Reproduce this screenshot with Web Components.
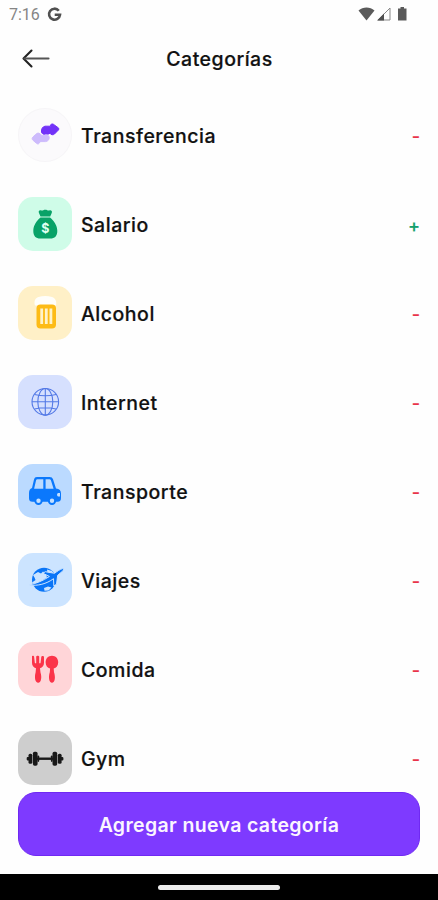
<!DOCTYPE html>
<html lang="es">
<head>
<meta charset="UTF-8">
<meta name="viewport" content="width=device-width, initial-scale=1.0">
<title>Categorías</title>
<style>
    body {
        margin: 0;
        background: #fefefe;
        font-family: Inter, "Liberation Sans", sans-serif;
        color: #111111;
    }
</style>
</head>
<body>
<categories-screen></categories-screen>

<script>
const ICONS = {
    transfer: `
        <path fill="#7232f8" stroke="#7232f8" stroke-width="1" stroke-linejoin="round" d="M27 18.200h5.500c0-2 1-2.700 2.800-2l4.700 3.400c1.200.8 1.200 2 0 2.800L36.500 26c-1.500 1.300-3.500 1-4.500-.8-2 1.300-3.500 1.600-5 1.300-2-.2-3-.7-3.500-2.500-.4-3 1-5.300 3.500-5.800z"/>
        <path fill="#cdbbfc" stroke="#cdbbfc" stroke-width="1" stroke-linejoin="round" d="M22 25.900c-1.500-1.500-3-.7-4.500.6L14.900 29c-1 1-1 2.200 0 3.200l3.600 3.100c1.500 1.300 3 .5 3.500-1.700h5.600c2.500-.4 4-2.100 3.500-4.600-.5-2-2.500-2.800-4.300-2-1.700 1-3.300.7-4.800-1.100z"/>`,
    salary: `
        <path fill="#08a267" d="M21.500 13.500c1.500-.7 2.500.5 3.800-.2 1.300-.6 2.700-.6 4 0 1.200.7 2.200-.5 3.700.2 1.200.6 1.200 1.500.5 3l-1.300 3h-9.700l-1.300-3c-.6-1.500-.8-2.400.3-3zM22.500 20.500h9.500c4 3.200 7.300 8 7.300 13.500 0 5-2.500 7.500-7 7.500H22.300c-4.500 0-7-2.500-7-7.500 0-5.500 3.200-10.300 7.200-13.500z"/>
        <text x="27.300" y="36" text-anchor="middle" font-size="12.500" font-weight="700" fill="#dffff1">$</text>`,
    beer: `
        <path fill="#fffefa" d="M17 19.500c-1.300-4 0-7.500 3.500-8.500 4.500-1.500 9-1.500 13.500 0 3.500 1.200 5 4.500 4 8.500z"/>
        <rect x="18.500" y="18.500" width="19.500" height="24" rx="4" fill="#fdbb16"/>
        <path stroke="#fff3c9" stroke-width="2.800" d="M23.700 22.500v15.500M28.300 22.500v15.500M32.900 22.500v15.500"/>`,
    globe: `
        <g fill="none" stroke="#5379e6" stroke-width="1.100">
            <circle cx="27.300" cy="26.800" r="13.300"/>
            <ellipse cx="27.300" cy="26.800" rx="7.500" ry="13.300"/>
            <path d="M27.300 13.500v26.600M14 26.800h26.600M16.500 19.500c6.500 1.600 15 1.600 21.600 0M16.500 34c6.500-1.600 15-1.600 21.600 0"/>
        </g>`,
    car: `
        <path fill="#0b78fc" fill-rule="evenodd" d="M19 13h12.500c2 0 3 .8 3.600 2.500L38 24.500c3.500.3 5 2 5 5v4.500c0 2.600-1 3.700-3.300 3.700H14.500c-2.300 0-3.500-1.100-3.500-3.500V29c0-2.700 1-4.300 3-5l2-8.500c.5-1.700 1.300-2.500 3-2.500zM19.300 15.200c-.6 0-1 .3-1.200 1l-2 8.500h9.200v-9.500zM27.600 15.200v9.500h8l-2.700-8.500c-.3-.7-.7-1-1.400-1z"/>
        <path fill="#c3dfff" d="M40 29h2v3.500h-2c-1.300-.6-1.300-2.900 0-3.500z"/>
        <g fill="#c3dfff" stroke="#0b78fc" stroke-width="2"><circle cx="20.500" cy="36.700" r="3.200"/><circle cx="34" cy="36.700" r="3.200"/></g>`,
    travel: `
        <circle cx="26" cy="26.800" r="12" fill="#0a75f7"/>
        <path fill="#cce4ff" d="M15 22l5-3 3 1.500 2-2 3 2.500 1 3.500-4 2.500 1.500 2-4.500 2.500-3-1.500-3 1-2-1.500 3.500-2.500-1-2.500zM29 16.500l5 1.500 2 3-4 1.500-2.500-2zM26 35l4-1.500 3.500 1-3 3-4 .3z"/>
        <path fill="#0a75f7" stroke="#cce4ff" stroke-width="1" d="M11 32c7-1.500 14-4.200 20.400-8.500l-6.400-3.200 2.300-1.600 9.200 1.600c2.500-1.800 5.400-4 8-4.700 1.500 0 1.200 1.500 0 2.600l-4.800 4.100-1.200 9-2.700 1.600-.3-7.200c-7 5.200-15.800 7.500-24.500 6.300z"/>`,
    food: `
        <path fill="#fb3449" d="M14 14.200c1-.6 2-.5 2.100.5l.8 6.500h1.300v-6.700c.3-1 2.700-1 3 0v6.700h1.300l.8-6.500c.2-1 2.200-1.100 2.700-.2v6.200c0 3-1.500 4.800-4 5.500l.5 4.200c1.500 4.500.8 10.300-2.300 10.300s-4-5.500-2.600-10.300l.4-4.200c-2.500-.7-4-2.500-4-5.500z"/>
        <path fill="#fb3449" d="M34 13.700c3.600 0 6.200 2.800 6.200 6.500 0 3.300-1.800 5.700-4.500 6.400l.3 3.600c1.700 4.800 1 10.500-2 10.500s-3.800-5.700-2.200-10.500l.3-3.600c-2.700-.7-4.500-3.100-4.500-6.400 0-3.700 2.700-6.500 6.400-6.500z"/>`,
    gym: `
        <g fill="#181818">
            <rect x="8.700" y="26" width="3" height="3.500" rx="1"/><rect x="10.500" y="22.700" width="3.800" height="10" rx="1.500"/><rect x="14.900" y="20.700" width="4.700" height="14" rx="1.700"/>
            <rect x="19" y="26.500" width="17" height="2.400"/>
            <rect x="34.500" y="20.700" width="4.700" height="14" rx="1.700"/><rect x="39.800" y="22.700" width="3.800" height="10" rx="1.500"/><rect x="42.400" y="26" width="3" height="3.500" rx="1"/>
            <rect x="19.500" y="24.500" width="1.700" height="6.400" rx=".8"/><rect x="32.900" y="24.500" width="1.700" height="6.400" rx=".8"/>
        </g>`
};

const CATEGORIES = [
    { name: 'Transferencia', icon: 'transfer', bg: '#fbfafc', sign: '-', round: true },
    { name: 'Salario', icon: 'salary', bg: '#cffce8', sign: '+' },
    { name: 'Alcohol', icon: 'beer', bg: '#fff0c7', sign: '-' },
    { name: 'Internet', icon: 'globe', bg: '#d6e0fe', sign: '-' },
    { name: 'Transporte', icon: 'car', bg: '#bbdaff', sign: '-' },
    { name: 'Viajes', icon: 'travel', bg: '#cce4ff', sign: '-' },
    { name: 'Comida', icon: 'food', bg: '#ffd5d8', sign: '-' },
    { name: 'Gym', icon: 'gym', bg: '#cecece', sign: '-' }
];

class StatusBar extends HTMLElement {
    constructor() {
        super();
        this.attachShadow({ mode: 'open' });
    }

    connectedCallback() {
        this.shadowRoot.innerHTML = `
            <style>
                :host {
                    display: flex;
                    align-items: center;
                    box-sizing: border-box;
                    height: 28px;
                    padding: 0 30px 0 9px;
                    font: 400 16px Roboto, sans-serif;
                    color: #858585;
                }

                .google {
                    margin-left: 7px;
                }

                .status {
                    margin-left: auto;
                }

                svg {
                    display: block;
                }
            </style>
            <span>7:16</span>
            <svg class="google" width="15" height="15" viewBox="0 0 15 15" fill="none" stroke="#505050" stroke-width="2.600">
                <path d="M11.800 3.700A5.500 5.500 0 1 0 13 7.800H7.700"/>
            </svg>
            <svg class="status" width="50" height="16" viewBox="0 0 50 16">
                <path fill="#5a5a5a" d="M.5 4.500c4.500-4 11.500-4 16 0l-8 10z"/>
                <path fill="none" stroke="#888" d="M20 14L32 2v12z"/>
                <path fill="#505050" d="M19 14.500l7-7v7z"/>
                <path fill="#5a5a5a" d="M42.500 1H46v1.500h2.500v12H40v-12h2.500z"/>
            </svg>
        `;
    }
}

class ScreenHeader extends HTMLElement {
    constructor() {
        super();
        this.attachShadow({ mode: 'open' });
    }

    connectedCallback() {
        this.shadowRoot.innerHTML = `
            <style>
                :host {
                    display: grid;
                    grid-template-columns: 30px 1fr 30px;
                    align-items: center;
                    height: 62px;
                    padding: 0 19px 0 20px;
                }

                h1 {
                    margin: 0;
                    font-size: 19.5px;
                    font-weight: 500;
                    letter-spacing: 0.5px;
                    text-align: center;
                    -webkit-text-stroke: 0.2px;
                }
            </style>
            <svg width="30" height="22" viewBox="0 0 30 22" fill="none" stroke="#222" stroke-width="2.100" stroke-linecap="round" stroke-linejoin="round">
                <path d="M11.500 2.500L3.500 10.500l8 8"/>
                <path stroke="#555" d="M4.500 10.500h24"/>
            </svg>
            <h1><slot></slot></h1>
        `;
    }
}

class CategoryRow extends HTMLElement {
    constructor() {
        super();
        this.attachShadow({ mode: 'open' });
    }

    connectedCallback() {
        const sign = this.getAttribute('sign');
        this.shadowRoot.innerHTML = `
            <style>
                :host {
                    display: flex;
                    align-items: center;
                    height: 54px;
                    font-size: 19.5px;
                    font-weight: 500;
                    -webkit-text-stroke: 0.2px;
                }

                .tile {
                    flex: none;
                    width: 54px;
                    height: 54px;
                    margin-right: 9px;
                    border-radius: 15px;
                    background: var(--tile-bg);
                }

                :host([round]) .tile {
                    border-radius: 50%;
                    box-shadow: inset 0 0 0 1px #f6f5f7;
                }

                .name {
                    flex: 1;
                    padding-top: 1px;
                    letter-spacing: 0.52px;
                }

                .sign {
                    padding-top: 2px;
                    font-size: 18px;
                    color: #e9324a;
                }

                .sign.plus {
                    color: #16a06c;
                }
            </style>
            <svg class="tile" viewBox="0 0 54 54" fill="none">${ICONS[this.getAttribute('icon')]}</svg>
            <span class="name"><slot></slot></span>
            <span class="sign ${sign === '+' ? 'plus' : ''}">${sign}</span>
        `;
    }
}

class PrimaryButton extends HTMLElement {
    constructor() {
        super();
        this.attachShadow({ mode: 'open' });
    }

    connectedCallback() {
        this.shadowRoot.innerHTML = `
            <style>
                :host {
                    display: block;
                }

                button {
                    display: block;
                    width: 100%;
                    height: 64px;
                    padding: 2px 0 0;
                    border: 1px solid #7029f2;
                    border-radius: 18px;
                    background: #7e3aff;
                    color: #fbf5ff;
                    font: 600 19.5px Inter, "Liberation Sans", sans-serif;
                    letter-spacing: 0.35px;
                    cursor: pointer;
                }
            </style>
            <button type="button"><slot></slot></button>
        `;
    }
}

class GestureBar extends HTMLElement {
    constructor() {
        super();
        this.attachShadow({ mode: 'open' });
    }

    connectedCallback() {
        this.shadowRoot.innerHTML = `
            <style>
                :host {
                    display: flex;
                    align-items: center;
                    justify-content: center;
                    height: 26px;
                    background: #000000;
                }

                div {
                    width: 122px;
                    height: 5px;
                    border-radius: 3px;
                    background: #ececec;
                }
            </style>
            <div></div>
        `;
    }
}

class CategoriesScreen extends HTMLElement {
    constructor() {
        super();
        this.attachShadow({ mode: 'open' });
    }

    connectedCallback() {
        const rows = CATEGORIES.map(c => `
            <category-row icon="${c.icon}" sign="${c.sign}" style="--tile-bg: ${c.bg}" ${c.round ? 'round' : ''}>${c.name}</category-row>
        `).join('');

        this.shadowRoot.innerHTML = `
            <style>
                :host {
                    display: flex;
                    flex-direction: column;
                    width: 438px;
                    height: 900px;
                    overflow: hidden;
                }

                main {
                    flex: 1;
                    display: flex;
                    flex-direction: column;
                    gap: 35.05px;
                    padding: 18px 18px 0;
                }

                primary-button {
                    margin: 0 18px 18px;
                }
            </style>
            <status-bar></status-bar>
            <screen-header>Categorías</screen-header>
            <main>${rows}</main>
            <primary-button>Agregar nueva categoría</primary-button>
            <gesture-bar></gesture-bar>
        `;
    }
}

customElements.define('status-bar', StatusBar);
customElements.define('screen-header', ScreenHeader);
customElements.define('category-row', CategoryRow);
customElements.define('primary-button', PrimaryButton);
customElements.define('gesture-bar', GestureBar);
customElements.define('categories-screen', CategoriesScreen);
</script>
</body>
</html>
